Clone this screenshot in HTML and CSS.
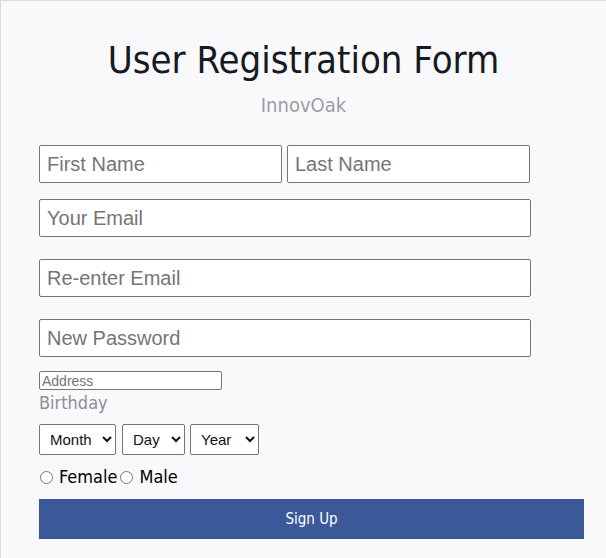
FILE: index.html
```html
<!DOCTYPE html>
<html>
<head>
<meta charset="utf-8">
<link rel="stylesheet" href="styles.css">
</head>
<body>
<div class="page">
  <h1 class="title">User Registration Form</h1>
  <div class="brand">InnovOak</div>
  <form class="form">
    <div class="name-row">
      <input class="field half" type="text" placeholder="First Name">
      <input class="field half" type="text" placeholder="Last Name">
    </div>
    <input class="field full email" type="text" placeholder="Your Email">
    <input class="field full reemail" type="text" placeholder="Re-enter Email">
    <input class="field full password" type="password" placeholder="New Password">
    <input class="address" type="text" placeholder="Address">
    <div class="label">Birthday</div>
    <div class="selects">
      <select class="sel month"><option>Month</option></select>
      <select class="sel day"><option>Day</option></select>
      <select class="sel year"><option>Year</option></select>
    </div>
    <div class="radios">
      <label class="radio"><input type="radio" name="g"><span>Female</span></label>
      <label class="radio"><input type="radio" name="g"><span>Male</span></label>
    </div>
    <button class="signup" type="button">Sign Up</button>
  </form>
</div>
</body>
</html>
```

FILE: styles.css
```css
html, body {
  margin: 0;
  padding: 0;
}
body {
  background: #f9f9fb;
}
.page {
  box-sizing: border-box;
  min-height: 558px;
  border-top: 1px solid #dcdcdc;
  border-left: 1px solid #dcdcdc;
  background: #f9f9fb;
  font-family: "DejaVu Sans", sans-serif;
  font-stretch: condensed;
}
.title {
  margin: 37px 0 0;
  text-align: center;
  font-size: 38px;
  line-height: 44px;
  font-weight: normal;
  color: #161a22;
}
.brand {
  margin-top: 11px;
  text-align: center;
  font-size: 20px;
  line-height: 24px;
  color: #9a9ea6;
}
.form {
  display: flex;
  flex-direction: column;
  align-items: flex-start;
  padding-left: 38px;
  margin-top: 28px;
}
.name-row {
  display: flex;
  gap: 5px;
}
.field {
  box-sizing: border-box;
  height: 38px;
  margin: 0;
  padding: 0 7px;
  border: 1px solid #767676;
  border-radius: 2px;
  background: #fff;
  font-family: "Liberation Sans", Arial, sans-serif;
  font-size: 20px;
}
.field::placeholder {
  color: #757575;
}
.half {
  width: 243px;
}
.full {
  width: 492px;
}
.email {
  margin-top: 16px;
}
.reemail, .password {
  margin-top: 22px;
}
.address {
  box-sizing: border-box;
  margin: 14px 0 0;
  width: 183px;
  height: 19px;
  padding: 0 2px;
  border: 1px solid #767676;
  border-radius: 2px;
  font-family: "Liberation Sans", Arial, sans-serif;
  font-size: 14px;
}
.address::placeholder {
  color: #757575;
}
.label {
  margin-top: 2px;
  font-size: 18px;
  line-height: 22px;
  color: #8a8e96;
}
.selects {
  display: flex;
  gap: 6px;
  margin-top: 10px;
}
.sel {
  box-sizing: border-box;
  height: 31px;
  margin: 0;
  padding: 0 4px 0 6px;
  border: 1px solid #767676;
  border-radius: 2px;
  background: #fff;
  color: #111;
  font-family: "Liberation Sans", Arial, sans-serif;
  font-size: 15px;
}
.month { width: 77px; }
.day { width: 63px; }
.year { width: 69px; margin-left: -1px; }
.radios {
  display: flex;
  gap: 2px;
  margin-top: 11px;
  font-size: 18px;
  line-height: 22px;
  color: #000;
}
.radio {
  display: flex;
  align-items: center;
}
.radio input {
  margin: 0 6px 0 1px;
  width: 13px;
  height: 13px;
}
.signup {
  margin-top: 11px;
  width: 545px;
  height: 40px;
  border: none;
  background: #3b5998;
  color: #fff;
  font-family: "DejaVu Sans", sans-serif;
  font-stretch: condensed;
  font-size: 15px;
  cursor: pointer;
}
```
